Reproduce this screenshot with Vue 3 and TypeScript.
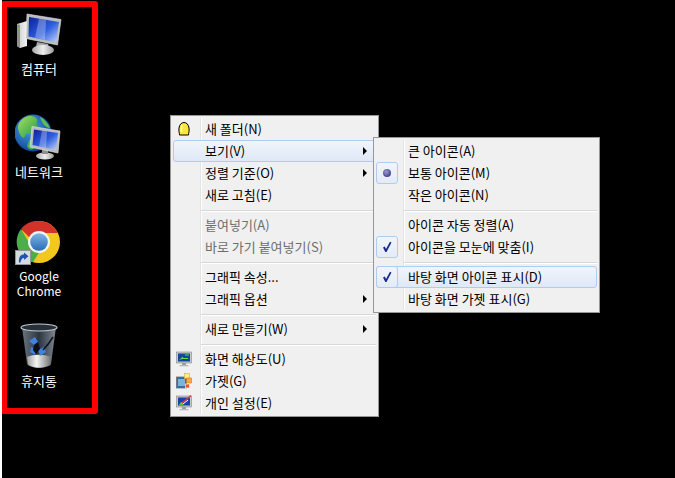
<template>
  <div class="desktop">
    <div class="icons">
      <div class="cell">
        <svg class="ico" viewBox="15 9 48 48">
          <path d="M17 24 L27 21 L27 46 L20 48 L17 46 Z" fill="url(#tower)" />
          <path d="M17 24 L20 25 L20 48 L17 46 Z" fill="#8f9190" />
          <rect x="18" y="28" width="1.4" height="2" fill="#5fd13f" />
          <path d="M37 42 L48 44 L49 48 L36 47 Z" fill="#a9abab" />
          <ellipse cx="43" cy="50" rx="11" ry="5" fill="url(#base)" />
          <path d="M27 14 L61 19.5 L57.5 45 L26 38.5 Z" fill="#b9bcbd" stroke="#e8e8e8" stroke-width=".6" />
          <path d="M29 17 L59 22 L56 42.5 L28.5 36.5 Z" fill="url(#screen)" />
          <path d="M39 18.8 L46 20 L45 39.8 L35 37.7 Z" fill="#fff" opacity=".28" />
        </svg>
        <span class="lbl">컴퓨터</span>
      </div>
      <div class="cell">
        <svg class="ico" viewBox="15 112 48 48">
          <circle cx="33" cy="133" r="18.5" fill="url(#sea)" />
          <path d="M24 118 C30 114 38 117 37 121 C35 126 40 127 37 132 C33 137 27 131 25 136 C23 141 19 134 18 128 C18 123 21 120 24 118 Z" fill="url(#land)" />
          <path d="M29 140 C33 138 37 142 35 147 C33 151 28 150 27 146 Z" fill="#43b54a" />
          <path d="M40 117 C44 119 48 123 50 128 C46 128 42 124 40 117 Z" fill="#5cc24e" />
          <ellipse cx="45" cy="156" rx="9" ry="3.4" fill="url(#base)" />
          <rect x="42" y="148" width="6" height="6" fill="#8d8f8f" />
          <path d="M32 126.5 L60 131 L58 153 L30 147 Z" fill="#b9bcbd" stroke="#e8e8e8" stroke-width=".6" />
          <path d="M34 129.5 L58 133 L56 150 L32.5 145 Z" fill="url(#screen)" />
          <path d="M42 130.6 L47 131.5 L46 148 L39 146.4 Z" fill="#fff" opacity=".28" />
        </svg>
        <span class="lbl">네트워크</span>
      </div>
      <div class="cell">
        <svg class="ico" viewBox="15 217 48 48">
          <circle cx="39" cy="242" r="21" fill="#f2c81e" />
          <path d="M39 221 A21 21 0 0 1 58 233 L39 233 A9 9 0 0 0 30.5 238.5 L21 229 A21 21 0 0 1 39 221 Z" fill="#d3322a" />
          <path d="M21 229 L31 246 A9.5 9.5 0 0 0 40 251 L33 262.2 A21 21 0 0 1 21 229 Z" fill="#4cae4a" />
          <circle cx="39" cy="242" r="11" fill="#f4f4f4" />
          <circle cx="39" cy="242" r="8.8" fill="url(#chromeblue)" />
          <rect x="15.5" y="250.5" width="15" height="14" fill="#d5dbe1" stroke="#8f9499" />
          <path d="M19 262.5 C18.5 257 20.5 254.5 24 254.5 L24 252.5 L28.5 256.2 L24 260 L24 258 C22 258 21 259.5 20.5 262.5 Z" fill="#1f55ad" />
        </svg>
        <span class="lbl lat">Google<br />Chrome</span>
      </div>
      <div class="cell">
        <svg class="ico" viewBox="15 321 48 48">
          <path d="M22 327 L27 364 C29 369 49 369 51 364 L56 327 Z" fill="url(#bin)" />
          <path d="M27 357 C33 354 45 354 51 357 L50 364 C46 369 32 369 28 364 Z" fill="url(#binbase)" />
          <path d="M29 341 L35 337 L38 342 L34 345 Z M31 347 L36 349 L35 355 L30 352 Z M38 350 L44 347 L46 352 L40 356 Z" fill="#3f82e0" />
          <path d="M34 345 L38 342 L40 349 L36 354 L33 350 Z" fill="#0b0f18" />
          <path d="M43 350 C47 346 50 342 53 337" stroke="#0e1420" stroke-width="1.5" fill="none" />
          <ellipse cx="39" cy="327.5" rx="18" ry="3.5" fill="#25303a" stroke="#c4c9cc" stroke-width="1.2" />
        </svg>
        <span class="lbl">휴지통</span>
      </div>
    </div>

    <div class="frame"></div>

    <div class="menu main">
      <template v-for="(item, i) in mainItems" :key="i">
        <div v-if="item.sep" class="sep"></div>
        <div v-else class="row" :class="{ on: item.on, off: item.off }">
          <span class="mark">
            <svg v-if="item.icon === 'shell'" class="small" viewBox="0 0 16 16">
              <path d="M3.5 14 C3.5 12 2.5 10 3 7 C3.5 3.5 5.5 1.5 8 1.500 C10.500 1.500 12.500 3.500 13 7 C13.500 10 12.500 12 12.500 14 Z" fill="#ffe63c" stroke="#000" stroke-width="1" stroke-linejoin="round" />
              <path d="M6 4 C5.300 6 5.300 8 5.500 11" stroke="#fffbd0" stroke-width="1.5" fill="none" />
            </svg>
            <svg v-else-if="item.icon === 'res'" class="small" viewBox="0 0 16 16">
              <rect x="0.5" y="1" width="15" height="11" fill="#c6c9c8" stroke="#888" stroke-width=".6" />
              <rect x="2" y="2.5" width="12" height="8" fill="#12469b" />
              <path d="M3 9 L7 5.5 L7 7 L12 7 L12 8 L6 8 Z M9 3.5 H13 V4.5 H9 Z" fill="#5fe04c" />
              <rect x="6" y="12" width="4" height="2" fill="#9a9c9c" />
              <rect x="3.5" y="14" width="9" height="1.3" fill="#b8baba" />
            </svg>
            <svg v-else-if="item.icon === 'gadget'" class="small" viewBox="0 0 16 16">
              <rect x="0.5" y="4" width="10" height="11" fill="#2e6da8" stroke="#6a7076" stroke-width=".8" />
              <rect x="2" y="6" width="7" height="7" fill="#7fb2d8" />
              <rect x="8.5" y="0.5" width="5" height="5" fill="#fff27a" stroke="#c8b23e" stroke-width=".6" />
              <rect x="10.5" y="5" width="5" height="5" fill="#f5a550" stroke="#c87a2c" stroke-width=".6" />
              <rect x="9.5" y="11" width="4" height="4" fill="#e65a20" stroke="#fff" stroke-width=".6" />
            </svg>
            <svg v-else-if="item.icon === 'look'" class="small" viewBox="0 0 16 16">
              <rect x="0.5" y="1" width="15" height="11" fill="#c6c9c8" stroke="#888" stroke-width=".6" />
              <rect x="2" y="2.5" width="12" height="8" fill="#1a3fb0" />
              <path d="M3 10 L5 7 C7 7 8 8 7 10 Z" fill="#58c94a" />
              <path d="M6 8 L15 0.5" stroke="#e23838" stroke-width="1.4" />
              <path d="M7 9 L12 5" stroke="#fff" stroke-width="1" />
              <rect x="6" y="12" width="4" height="2" fill="#9a9c9c" />
              <rect x="3.5" y="14" width="9" height="1.3" fill="#b8baba" />
            </svg>
          </span>
          <span class="txt">{{ item.label }}</span>
          <span v-if="item.arrow" class="arrow"></span>
        </div>
      </template>
    </div>

    <div class="menu sub">
      <template v-for="(item, i) in subItems" :key="i">
        <div v-if="item.sep" class="sep"></div>
        <div v-else class="row" :class="{ on: item.on }">
          <span class="mark" :class="{ boxed: item.icon }">
            <span v-if="item.icon === 'dot'" class="dot"></span>
            <svg v-else-if="item.icon === 'check'" class="tick" viewBox="0 0 10 12">
              <path d="M1 6.5 L2.8 5.5 L4 8 L8 0.8 L9.5 1.5 L4.5 11 L3.3 11 Z" fill="#1c2a8c" />
            </svg>
          </span>
          <span class="txt">{{ item.label }}</span>
        </div>
      </template>
    </div>

    <svg class="defs" width="0" height="0">
      <defs>
        <linearGradient id="screen" x1="0" y1="0" x2="1" y2="1">
          <stop offset="0" stop-color="#0a1f9e" />
          <stop offset=".55" stop-color="#2f5fe0" />
          <stop offset="1" stop-color="#c8d8f8" />
        </linearGradient>
        <linearGradient id="tower" x1="0" y1="0" x2="1" y2="0">
          <stop offset="0" stop-color="#c9cbca" />
          <stop offset="1" stop-color="#f4f4f4" />
        </linearGradient>
        <linearGradient id="base" x1="0" y1="0" x2="1" y2="0">
          <stop offset="0" stop-color="#a8a9a8" />
          <stop offset=".5" stop-color="#eeeeee" />
          <stop offset="1" stop-color="#9a9b9a" />
        </linearGradient>
        <radialGradient id="sea" cx=".4" cy=".35" r=".7">
          <stop offset="0" stop-color="#4aa4e8" />
          <stop offset="1" stop-color="#0d3f94" />
        </radialGradient>
        <linearGradient id="land" x1="0" y1="0" x2="1" y2="1">
          <stop offset="0" stop-color="#a5e05e" />
          <stop offset="1" stop-color="#1f9a45" />
        </linearGradient>
        <linearGradient id="chromeblue" x1="0" y1="0" x2="0" y2="1">
          <stop offset="0" stop-color="#7fb4e4" />
          <stop offset="1" stop-color="#2a6cb8" />
        </linearGradient>
        <linearGradient id="bin" x1="0" y1="0" x2="1" y2="0">
          <stop offset="0" stop-color="#6a747e" />
          <stop offset=".5" stop-color="#2c3642" />
          <stop offset="1" stop-color="#808992" />
        </linearGradient>
        <linearGradient id="binbase" x1="0" y1="0" x2="1" y2="0">
          <stop offset="0" stop-color="#9b9d9d" />
          <stop offset=".4" stop-color="#f4f4f4" />
          <stop offset="1" stop-color="#707272" />
        </linearGradient>
      </defs>
    </svg>
  </div>
</template>

<script setup lang="ts">
interface MenuItem {
  label?: string;
  sep?: boolean;
  arrow?: boolean;
  off?: boolean;
  on?: boolean;
  icon?: string;
}

const mainItems: MenuItem[] = [
  { label: "새 폴더(N)", icon: "shell" },
  { label: "보기(V)", arrow: true, on: true },
  { label: "정렬 기준(O)", arrow: true },
  { label: "새로 고침(E)" },
  { sep: true },
  { label: "붙여넣기(A)", off: true },
  { label: "바로 가기 붙여넣기(S)", off: true },
  { sep: true },
  { label: "그래픽 속성..." },
  { label: "그래픽 옵션", arrow: true },
  { sep: true },
  { label: "새로 만들기(W)", arrow: true },
  { sep: true },
  { label: "화면 해상도(U)", icon: "res" },
  { label: "가젯(G)", icon: "gadget" },
  { label: "개인 설정(E)", icon: "look" },
];

const subItems: MenuItem[] = [
  { label: "큰 아이콘(A)" },
  { label: "보통 아이콘(M)", icon: "dot" },
  { label: "작은 아이콘(N)" },
  { sep: true },
  { label: "아이콘 자동 정렬(A)" },
  { label: "아이콘을 모눈에 맞춤(I)", icon: "check" },
  { sep: true },
  { label: "바탕 화면 아이콘 표시(D)", icon: "check", on: true },
  { label: "바탕 화면 가젯 표시(G)" },
];
</script>

<style scoped>
.desktop {
  position: relative;
  width: 675px;
  height: 478px;
  box-sizing: border-box;
  border-left: 2px solid #fff;
  background: #000;
  overflow: hidden;
  font-family: "Noto Sans CJK KR", "Noto Sans", sans-serif;
  font-size: 13px;
}

.icons {
  display: grid;
  grid-template-rows: 103px 105px 104px 104px;
  width: 74px;
  padding-top: 9px;
}

.cell {
  display: flex;
  flex-direction: column;
  align-items: center;
}

.ico {
  width: 48px;
  height: 48px;
  margin-bottom: 4px;
}

.lbl {
  color: #fff;
  line-height: 15px;
  text-align: center;
}

.lbl.lat {
  margin-top: -1px;
  font-size: 12px;
}

.frame {
  position: absolute;
  left: -1px;
  top: 1px;
  width: 97px;
  height: 413px;
  box-sizing: border-box;
  border: 6px solid #f00;
  border-radius: 3px;
}

.menu {
  position: absolute;
  box-sizing: border-box;
  background: #f0f0f0;
  border: 1px solid #979797;
  padding: 2px 2px 1px;
  color: #000;
}

.menu::before {
  content: "";
  position: absolute;
  top: 2px;
  bottom: 2px;
  left: 29px;
  width: 1px;
  background: #e2e3e3;
  box-shadow: 1px 0 0 #fff;
}

.main {
  left: 168px;
  top: 115px;
  width: 209px;
  height: 302px;
}

.sub {
  left: 371px;
  top: 137px;
  width: 227px;
  height: 176px;
}

.row {
  position: relative;
  display: flex;
  align-items: center;
  height: 22px;
  box-sizing: border-box;
  border: 1px solid transparent;
  border-radius: 3px;
}

.row.on {
  border-color: #aeccf0;
  background: linear-gradient(#f1f5fb, #dfe8f6);
}

.row.off {
  color: #6d6d6d;
}

.mark {
  display: flex;
  align-items: center;
  justify-content: center;
  flex: none;
  box-sizing: border-box;
  width: 22px;
  height: 22px;
  margin: -1px 10px -1px -1px;
  border: 1px solid transparent;
  border-radius: 3px;
}

.mark.boxed {
  border-color: #aeccf0;
  background: linear-gradient(#f1f5fb, #e4ebf7);
}

.small {
  width: 16px;
  height: 16px;
}

.txt {
  line-height: 20px;
  white-space: nowrap;
}

.arrow {
  width: 0;
  height: 0;
  margin-left: auto;
  margin-right: 8px;
  border-left: 4px solid #000;
  border-top: 4px solid transparent;
  border-bottom: 4px solid transparent;
}

.dot {
  width: 8px;
  height: 8px;
  border-radius: 50%;
  background: radial-gradient(circle at 40% 35%, #9a9ad8, #23236b);
}

.tick {
  width: 10px;
  height: 12px;
}

.sep {
  position: relative;
  height: 8px;
  box-sizing: border-box;
  margin-left: 28px;
  padding-top: 4px;
}

.sep::before {
  content: "";
  display: block;
  height: 1px;
  background: #d7d7d7;
  box-shadow: 0 1px 0 #fff;
}

.defs {
  position: absolute;
}
</style>

<style>
html,
body {
  background: #000;
}
</style>
